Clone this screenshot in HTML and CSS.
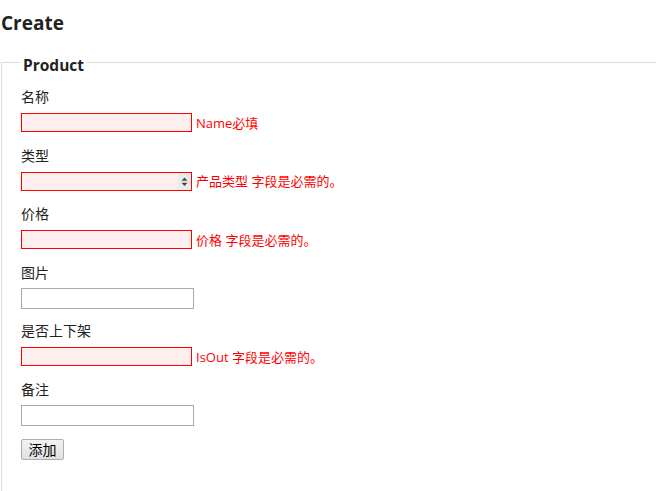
FILE: index.html
```html
<!DOCTYPE html>
<html lang="zh">
<head>
<meta charset="utf-8">
<title>Create</title>
<link rel="stylesheet" href="styles.css">
</head>
<body>
<div class="page">
  <h2 class="title">Create</h2>
  <form class="form">
    <fieldset class="product">
      <legend class="legend">Product</legend>

      <div class="editor-label">名称</div>
      <div class="editor-field">
        <input class="text-box invalid" type="text">
        <span class="field-error">Name必填</span>
      </div>

      <div class="editor-label">类型</div>
      <div class="editor-field">
        <span class="select-wrap">
          <select class="select-box invalid"><option></option></select>
          <svg class="spinner" width="13" height="17" viewBox="0 0 13 17">
            <rect x="0" y="0" width="13" height="17" fill="#ebebeb"/>
            <path d="M3.5 7.8 L9.5 7.8 L6.5 4.6 Z" fill="#4a4a4a"/>
            <path d="M3.5 9.8 L9.5 9.8 L6.5 13 Z" fill="#4a4a4a"/>
          </svg>
        </span>
        <span class="field-error">产品类型 字段是必需的。</span>
      </div>

      <div class="editor-label">价格</div>
      <div class="editor-field">
        <input class="text-box invalid" type="text">
        <span class="field-error">价格 字段是必需的。</span>
      </div>

      <div class="editor-label">图片</div>
      <div class="editor-field">
        <input class="text-box" type="text">
      </div>

      <div class="editor-label">是否上下架</div>
      <div class="editor-field">
        <input class="text-box invalid" type="text">
        <span class="field-error">IsOut 字段是必需的。</span>
      </div>

      <div class="editor-label">备注</div>
      <div class="editor-field">
        <input class="text-box" type="text">
      </div>

      <div class="actions">
        <button class="submit" type="button">添加</button>
      </div>
    </fieldset>
  </form>
</div>
</body>
</html>
```

FILE: styles.css
```css
html, body {
  margin: 0;
  padding: 0;
  overflow: hidden;
  background: #fff;
}

body {
  font-family: "Open Sans", "Noto Sans CJK SC", sans-serif;
  font-size: 14px;
  color: #222;
}

.page {
  padding-left: 1px;
}

.title {
  margin: 11px 0 0 0;
  font-size: 19px;
  line-height: 24px;
  font-weight: bold;
  color: #222;
}

.form {
  margin: 0;
}

.product {
  margin: 14px 0 0 0;
  padding: 0 0 40px 19px;
  border: 1px solid #dddddd;
  border-right: none;
  border-bottom: none;
  min-height: 400px;
}

.legend {
  font-size: 15.5px;
  font-weight: bold;
  padding: 5px 2px 0 2px;
  margin-left: 0;
  color: #222;
}

.editor-label {
  margin-top: 12.5px;
  line-height: 20px;
  height: 20px;
}

.editor-label:first-of-type {
  margin-top: 11px;
}

.editor-field {
  margin-top: 5px;
  height: 21px;
  display: flex;
  align-items: center;
  gap: 4px;
}

.text-box {
  box-sizing: border-box;
  width: 173px;
  height: 21px;
  margin: 0;
  padding: 1px 2px;
  border: 1px solid #a9a9a9;
  background: #fff;
  font: inherit;
  outline: none;
}

.text-box.invalid,
.select-box.invalid {
  width: 171px;
  height: 19px;
  border: 1px solid #ff0000;
  background-color: #ffeeee;
}

.select-wrap {
  position: relative;
  display: inline-flex;
}

.select-box {
  box-sizing: border-box;
  appearance: none;
  -webkit-appearance: none;
  margin: 0;
  padding: 0 2px;
  font: inherit;
  border-radius: 0;
  outline: none;
}

.spinner {
  position: absolute;
  right: 1px;
  top: 1px;
}

.field-error {
  color: #ff0000;
  font-size: 13px;
  line-height: 20px;
  white-space: nowrap;
}

.actions {
  margin-top: 13.5px;
}

.submit {
  box-sizing: border-box;
  width: 43px;
  height: 21px;
  margin: 0;
  padding: 0;
  font: inherit;
  line-height: 19px;
  color: #000;
  border: 1px solid #adadad;
  border-radius: 2px;
  background: linear-gradient(#f2f2f2, #e0e0e0);
}
```
